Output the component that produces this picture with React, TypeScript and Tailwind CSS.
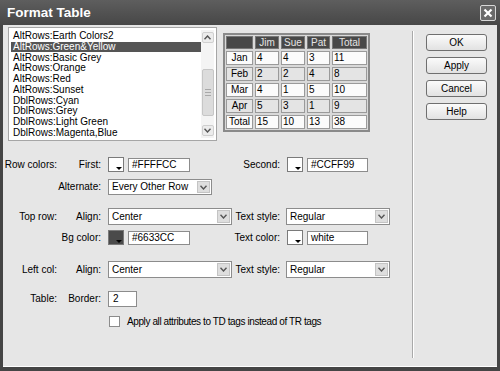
import React from "react";

const styles = [
  "AltRows:Earth Colors2",
  "AltRows:Green&Yellow",
  "AltRows:Basic Grey",
  "AltRows:Orange",
  "AltRows:Red",
  "AltRows:Sunset",
  "DblRows:Cyan",
  "DblRows:Grey",
  "DblRows:Light Green",
  "DblRows:Magenta,Blue",
];

const rows = [
  ["Jan", "4", "4", "3", "11"],
  ["Feb", "2", "2", "4", "8"],
  ["Mar", "4", "1", "5", "10"],
  ["Apr", "5", "3", "1", "9"],
  ["Total", "15", "10", "13", "38"],
];

function Chevron({ up = false }: { up?: boolean }) {
  return (
    <svg width="7" height="5" viewBox="0 0 7 5">
      <path
        d={up ? "M0.5 4.2 L3.5 1 L6.5 4.2" : "M0.5 0.8 L3.5 4 L6.5 0.8"}
        stroke="#555"
        strokeWidth="1.4"
        fill="none"
      />
    </svg>
  );
}

function Select({ value, width }: { value: string; width: string }) {
  return (
    <div className={`flex h-full items-stretch border border-[#8c8c8c] bg-white ${width}`}>
      <span className="flex flex-1 items-center pl-[3px]">{value}</span>
      <span className="m-[1px] flex w-[13px] items-center justify-center border border-[#c4c4c4] bg-[#dedede]">
        <Chevron />
      </span>
    </div>
  );
}

function Swatch({ dark = false }: { dark?: boolean }) {
  return (
    <div
      className={`relative h-[15px] w-[16px] border border-[#7a7a7a] ${
        dark ? "bg-[#4a4a4a]" : "bg-white"
      }`}
    >
      <span className="absolute bottom-[1px] right-[1px] h-0 w-0 border-l-[3px] border-r-[3px] border-t-[3px] border-l-transparent border-r-transparent border-t-black" />
    </div>
  );
}

function TextBox({ value, width }: { value: string; width: string }) {
  return (
    <div className={`flex h-[14px] items-center border border-[#8c8c8c] bg-white pl-[3px] ${width}`}>
      {value}
    </div>
  );
}

function Labels({ a, b }: { a: string; b: string }) {
  return (
    <>
      <span className="w-[54px] text-right">{a}</span>
      <span className="w-[44px] text-right">{b}</span>
    </>
  );
}

function Button({ label }: { label: string }) {
  return (
    <button className="flex h-[17px] w-[61px] items-center justify-center rounded-[3px] border border-[#6f6f6f] bg-gradient-to-b from-[#fbfbfb] to-[#e2e2e2]">
      {label}
    </button>
  );
}

export default function App() {
  return (
    <div className="flex h-[371px] w-[500px] flex-col overflow-hidden bg-[#454545] font-['Liberation_Sans',Arial,sans-serif] text-[10px] leading-none text-black">
      {/* title bar */}
      <div className="flex h-[25px] items-center justify-between bg-gradient-to-b from-[#5e5e5e] to-[#474747] pl-[7px] pr-[4px]">
        <span className="text-[13.5px] font-bold text-white">Format Table</span>
        <span className="flex h-[16px] w-[16px] items-center justify-center rounded-[2px] border border-[#d8d8d8] bg-[#6a6a6a]">
          <svg width="10" height="10" viewBox="0 0 10 10">
            <path d="M1.5 1.5 L8.5 8.5 M8.5 1.5 L1.5 8.5" stroke="white" strokeWidth="2.2" />
          </svg>
        </span>
      </div>

      <div className="mx-[3px] mb-[4px] flex flex-1 border-b border-white bg-[#e6e6e6]">
        {/* left content */}
        <div className="flex w-[409px] flex-col">
          <div className="ml-[5px] mt-[2px] flex items-start">
            {/* style list */}
            <div className="flex h-[114px] w-[209px] border border-[#a6a6a6] bg-white p-[2px]">
              <div className="flex flex-1 flex-col pt-[1px]">
                {styles.map((s, i) => (
                  <div
                    key={s}
                    className={`flex h-[11px] items-center pl-[2px] ${
                      i === 1 ? "bg-[#555] text-white" : ""
                    }`}
                  >
                    {s}
                  </div>
                ))}
              </div>
              <div className="flex w-[13px] flex-col items-center bg-[#f4f4f4] py-[2px]">
                <span className="flex h-[11px] w-[12px] items-center justify-center rounded-[2px] border border-[#cfcfcf] bg-[#ececec]">
                  <Chevron up />
                </span>
                <span className="mt-[26px] flex h-[47px] w-[12px] flex-col items-center justify-center gap-[2px] rounded-[2px] border border-[#c6c6c6] bg-[#dcdcdc]">
                  <span className="h-px w-[6px] bg-[#a8a8a8]" />
                  <span className="h-px w-[6px] bg-[#a8a8a8]" />
                  <span className="h-px w-[6px] bg-[#a8a8a8]" />
                </span>
                <span className="mt-auto flex h-[11px] w-[12px] items-center justify-center rounded-[2px] border border-[#cfcfcf] bg-[#ececec]">
                  <Chevron />
                </span>
              </div>
            </div>

            {/* preview table */}
            <div className="ml-[6px] mt-[6px] grid grid-cols-[27px_24px_24px_23px_35px] gap-[2px] border-2 border-[#8a8a8a] bg-[#d9d9d9] p-[1px]">
              {["", "Jim", "Sue", "Pat", "Total"].map((h, i) => (
                <div
                  key={i}
                  className="flex h-[13px] items-center justify-center border border-[#777] bg-[#484848] text-[#e4e4e4]"
                >
                  {h}
                </div>
              ))}
              {rows.map((r, ri) =>
                r.map((c, ci) => (
                  <div
                    key={`${ri}-${ci}`}
                    className={`flex h-[14px] items-center border border-[#9a9a9a] ${
                      ci === 0 ? "justify-center" : "pl-[1px]"
                    } ${ri % 2 === 1 ? "bg-[#e4e4e4]" : "bg-[#fbfbfb]"}`}
                  >
                    {c}
                  </div>
                ))
              )}
            </div>
          </div>

          {/* row colors */}
          <div className="mt-[16px] flex h-[15px] items-center">
            <Labels a="Row colors:" b="First:" />
            <div className="ml-[7px] flex w-[125px] items-center gap-[4px]">
              <Swatch />
              <TextBox value="#FFFFCC" width="w-[62px]" />
            </div>
            <span className="w-[47px] text-right">Second:</span>
            <div className="ml-[7px] flex items-center gap-[4px]">
              <Swatch />
              <TextBox value="#CCFF99" width="w-[61px]" />
            </div>
          </div>

          <div className="mt-[7px] flex h-[16px] items-center">
            <Labels a="" b="Alternate:" />
            <div className="ml-[7px] h-full">
              <Select value="Every Other Row" width="w-[104px]" />
            </div>
          </div>

          {/* top row */}
          <div className="mt-[13px] flex h-[17px] items-center">
            <Labels a="Top row:" b="Align:" />
            <div className="ml-[7px] h-full w-[125px]">
              <Select value="Center" width="w-[124px]" />
            </div>
            <span className="w-[47px] text-right">Text style:</span>
            <div className="ml-[6px] h-full">
              <Select value="Regular" width="w-[104px]" />
            </div>
          </div>

          <div className="mt-[5px] flex h-[15px] items-center">
            <Labels a="" b="Bg color:" />
            <div className="ml-[7px] flex w-[125px] items-center gap-[4px]">
              <Swatch dark />
              <TextBox value="#6633CC" width="w-[62px]" />
            </div>
            <span className="w-[47px] text-right">Text color:</span>
            <div className="ml-[7px] flex items-center gap-[4px]">
              <Swatch />
              <TextBox value="white" width="w-[61px]" />
            </div>
          </div>

          {/* left col */}
          <div className="mt-[16px] flex h-[17px] items-center">
            <Labels a="Left col:" b="Align:" />
            <div className="ml-[7px] h-full w-[125px]">
              <Select value="Center" width="w-[124px]" />
            </div>
            <span className="w-[47px] text-right">Text style:</span>
            <div className="ml-[6px] h-full">
              <Select value="Regular" width="w-[104px]" />
            </div>
          </div>

          {/* table */}
          <div className="mt-[13px] flex h-[16px] items-center">
            <Labels a="Table:" b="Border:" />
            <div className="ml-[7px] flex h-full w-[29px] items-center border border-[#8c8c8c] bg-white pl-[4px]">
              2
            </div>
          </div>

          <div className="ml-[106px] mt-[9px] flex items-center">
            <span className="h-[11px] w-[11px] border border-[#8c8c8c] bg-white" />
            <span className="ml-[7px] tracking-[-0.4px]">
              Apply all attributes to TD tags instead of TR tags
            </span>
          </div>
        </div>

        {/* separator */}
        <div className="mb-[8px] mt-[6px] flex w-[3px]">
          <span className="w-px bg-[#a9a9a9]" />
          <span className="w-px bg-white" />
        </div>

        {/* buttons */}
        <div className="ml-[11px] mt-[9px] flex flex-col gap-[6px]">
          <Button label="OK" />
          <Button label="Apply" />
          <Button label="Cancel" />
          <Button label="Help" />
        </div>
      </div>
    </div>
  );
}
